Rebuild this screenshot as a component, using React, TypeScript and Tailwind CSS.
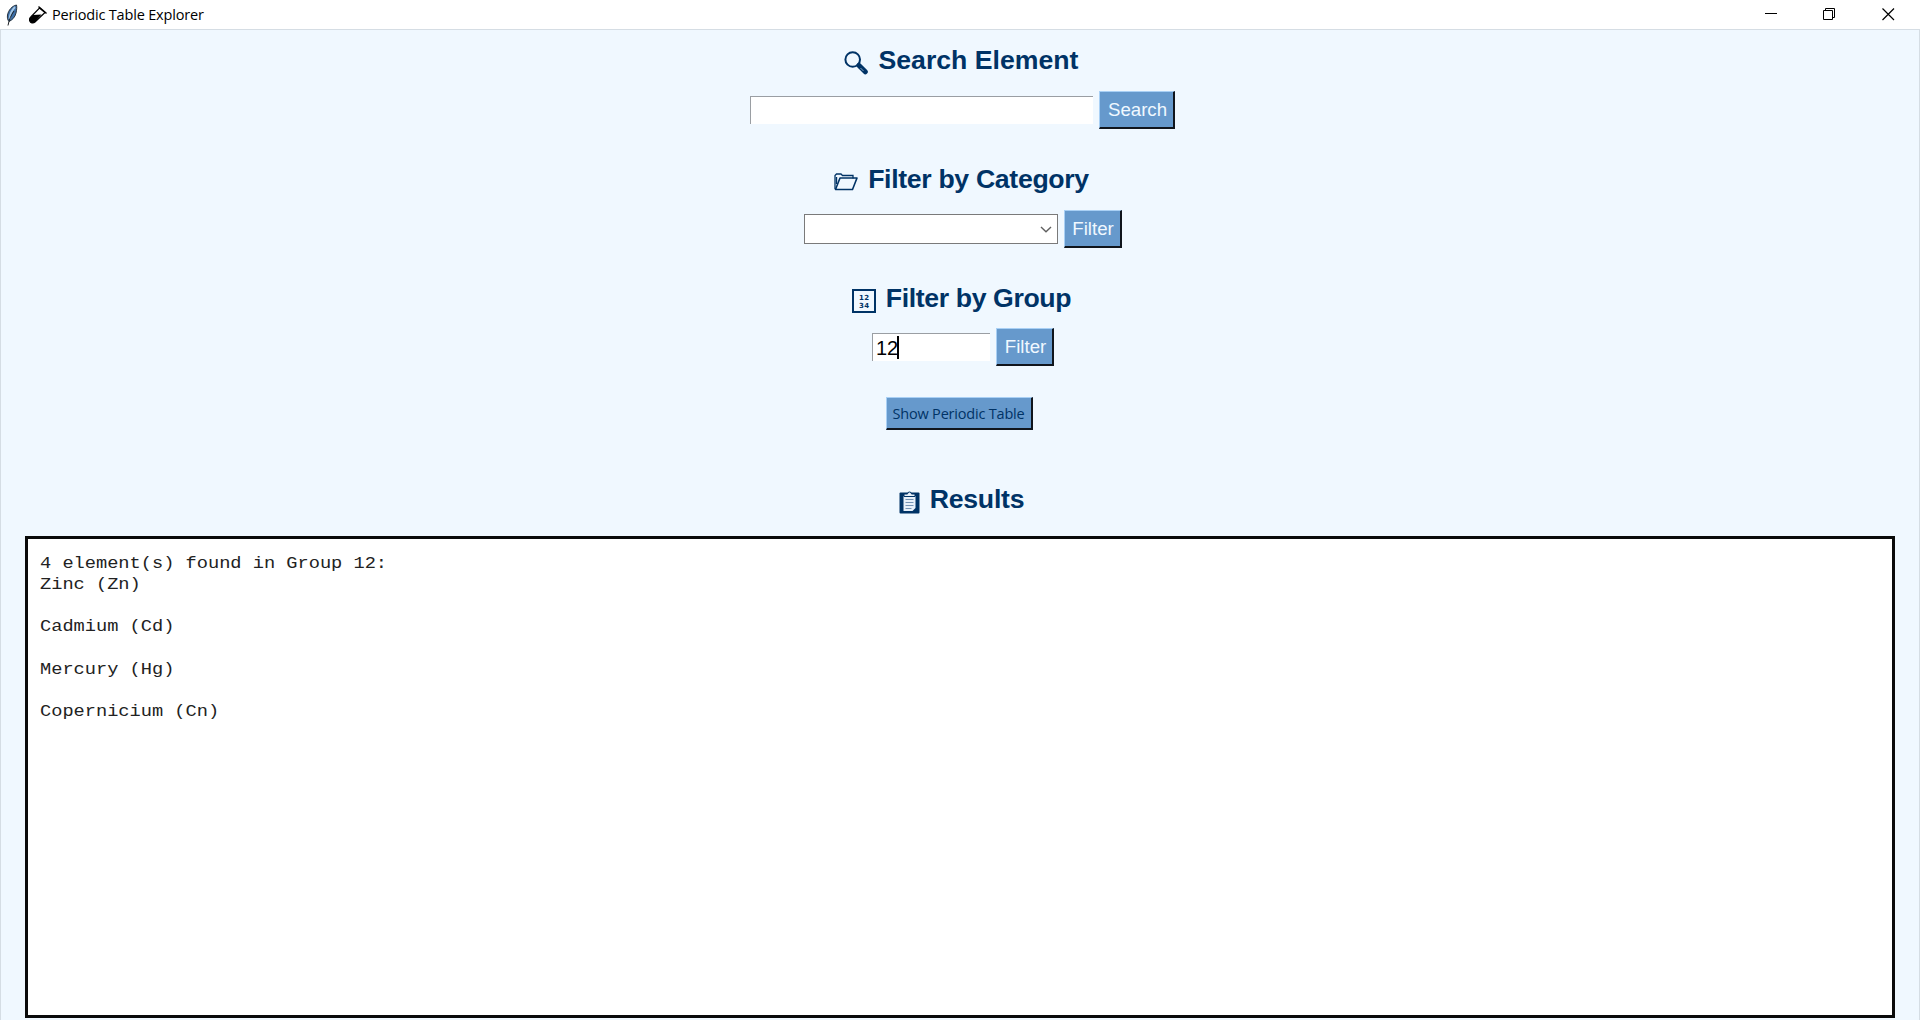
import React, { type ReactNode } from "react";

function Heading({ icon, children, tracking }: { icon: ReactNode; children: ReactNode; tracking: string }) {
  return (
    <h2 className="flex h-[40px] items-center justify-center gap-[10px] pl-[3px] font-['Liberation_Sans',sans-serif] text-[26.67px] leading-[40px] font-bold whitespace-nowrap text-[#003366]">
      {icon}
      <span className={tracking}>{children}</span>
    </h2>
  );
}

function Button({ children, className }: { children: ReactNode; className: string }) {
  return (
    <button
      className={`flex items-center justify-center border-t-1 border-r-2 border-b-2 border-l-1 border-t-[#a9d0f5] border-r-[#10151c] border-b-[#10151c] border-l-[#a9d0f5] bg-[#6699cc] whitespace-nowrap ${className}`}
    >
      {children}
    </button>
  );
}

const actionText = "h-[38px] pl-[2px] font-['Liberation_Sans',sans-serif] text-[18.67px] leading-[36px] text-[#f0f8ff]";
const field = "border-t border-l border-t-[#9a9ea3] border-l-[#9a9ea3] bg-white";

function Feather() {
  return (
    <svg className="ml-[6px] h-[22px] w-[12px]" viewBox="0 0 12 22">
      <path d="M10.500 1C6 2 2.500 6 1.500 11c-.4 3 .2 5 1.500 6.500 3-1.500 6-4 7-8.500C10.700 6 11 3 10.500 1Z" fill="#3d6fa8" stroke="#26333f" strokeWidth="1" />
      <path d="M9 3C6 6 4 10 3.500 15" stroke="#a5c8e6" strokeWidth="1.800" fill="none" />
      <path d="M8 7C5 11 3 16 2 21.500" stroke="#1f2326" strokeWidth="1" fill="none" />
    </svg>
  );
}

function TestTube() {
  return (
    <svg className="ml-[11px] h-[18px] w-[18px]" viewBox="0 0 18 18">
      <path d="M10.500 2 16 6.500 6 16C4 17.700 1.500 16.800.800 15 .200 13.500.600 12 2 10.700Z" fill="#fff" stroke="#000" strokeWidth="1.200" />
      <path d="M4 9 12.500 8.500 6 16C4 17.700 1.500 16.800.800 15 .200 13.500.600 12 2 10.700Z" fill="#000" />
      <path d="m10 1 7 6" stroke="#000" strokeWidth="1.600" strokeLinecap="round" />
    </svg>
  );
}

function Magnifier() {
  return (
    <svg className="mt-[6px] h-[24px] w-[24px]" viewBox="0 0 24 24" fill="none">
      <circle cx="8.700" cy="8.500" r="7.300" stroke="#003366" strokeWidth="2" />
      <path d="m13 13.500 3 2" stroke="#003366" strokeWidth="3" />
      <path d="m15 14.500 6.300 6.300" stroke="#003366" strokeWidth="5" strokeLinecap="round" />
      <path d="m16.500 17 3 3" stroke="#8aa6c4" strokeWidth="1" />
    </svg>
  );
}

function Folder() {
  return (
    <svg className="mt-[6px] h-[18px] w-[24px]" viewBox="0 0 24 18" fill="none" stroke="#003366">
      <path d="M1 16V2.500L2.500 1H7l1.500 1.500H19v3" strokeWidth="1.300" />
      <path d="M1.500 16.500 6 5h17l-4.500 11.500Z" strokeWidth="1.600" strokeLinejoin="round" />
      <path d="M2.500 4v7" strokeWidth="1.400" />
    </svg>
  );
}

function Numbers() {
  return (
    <svg className="mt-[5px] h-[24px] w-[24px]" viewBox="0 0 24 24" fill="none" stroke="#003366">
      <rect x="1" y="1" width="22" height="22" strokeWidth="2" />
      <text x="7" y="11" fontSize="7" fontWeight="700" fontFamily="DejaVu Sans" textLength="10" fill="#003366" stroke="none">12</text>
      <text x="7" y="18.500" fontSize="7" fontWeight="700" fontFamily="DejaVu Sans" textLength="10" fill="#003366" stroke="none">34</text>
    </svg>
  );
}

function Clipboard() {
  return (
    <svg className="mt-[5px] h-[24px] w-[21px]" viewBox="0 0 21 24">
      <rect x=".5" y="2.500" width="20" height="21" rx="1" fill="#003366" />
      <path d="M4.500 6h12v12l-3 3h-9Z" fill="#e8f1fb" />
      <path d="M5 6.500V4h3.500a2 2 0 0 1 4 0H16v2.500Z" fill="#e8f1fb" stroke="#003366" strokeWidth="1" />
      <path d="M6.500 9.500h8M6.500 12.500h8M6.500 15.500h8M6.500 18.500h6" stroke="#7593b5" strokeWidth="1" />
    </svg>
  );
}

const results = `4 element(s) found in Group 12:
Zinc (Zn)

Cadmium (Cd)

Mercury (Hg)

Copernicium (Cn)`;

export default function App() {
  return (
    <div className="flex h-[1020px] w-full flex-col overflow-hidden bg-white">
      <header className="flex h-[29px] shrink-0 items-center font-['Open_Sans',sans-serif] text-black">
        <Feather />
        <TestTube />
        <span className="ml-[5px] text-[14.5px] leading-[28px] tracking-[-0.18px] whitespace-nowrap">Periodic Table Explorer</span>
        <div className="mr-[25px] ml-auto flex items-center gap-[46px]">
          <svg className="h-[13px] w-[13px]" viewBox="0 0 13 13"><path d="M1 5.500h12" stroke="#000" /></svg>
          <svg className="h-[13px] w-[13px]" viewBox="0 0 13 13" fill="none" stroke="#000"><path d="M.5 2.500h9v9h-9ZM2.500 2.500v-2h9v9h-2" /></svg>
          <svg className="h-[13px] w-[13px]" viewBox="0 0 13 13" fill="none" stroke="#000" strokeWidth="1.200"><path d="m.5.5 11.500 11.500M12 .5.5 12" /></svg>
        </div>
      </header>
      <main className="flex min-h-0 flex-1 flex-col border-x border-t border-[#d5dde4] bg-[#f0f8ff]">
        <section className="pt-[10px]">
          <Heading icon={<Magnifier />} tracking="tracking-normal">Search Element</Heading>
          <div className="mt-[11px] flex h-[38px] items-center justify-center gap-[6px] pl-[5px]">
            <input className={`h-[28px] w-[343px] ${field}`} />
            <Button className={`w-[76px] ${actionText}`}>Search</Button>
          </div>
        </section>
        <section className="pt-[30px]">
          <Heading icon={<Folder />} tracking="tracking-[-0.33px]">Filter by Category</Heading>
          <div className="mt-[11px] flex h-[38px] items-center justify-center gap-[6px] pl-[5px]">
            <div className="flex h-[30px] w-[254px] items-center justify-end border border-[#7a7a7a] bg-white pr-[5px]">
              <svg className="h-[7px] w-[12px]" viewBox="0 0 12 7" fill="none"><path d="m1 1 5 4.700L11 1" stroke="#606060" strokeWidth="1.400" /></svg>
            </div>
            <Button className={`w-[58px] ${actionText}`}>Filter</Button>
          </div>
        </section>
        <section className="pt-[30px]">
          <Heading icon={<Numbers />} tracking="tracking-[-0.38px]">Filter by Group</Heading>
          <div className="mt-[10px] flex h-[38px] items-center justify-center gap-[6px] pl-[6px]">
            <div className={`flex h-[28px] w-[118px] items-center pl-[3px] font-['Liberation_Sans',sans-serif] text-[20px] leading-[28px] text-black ${field}`}>
              <span>12</span>
              <span className="-ml-px h-[23px] w-[2px] bg-black" />
            </div>
            <Button className={`w-[58px] ${actionText}`}>Filter</Button>
          </div>
        </section>
        <div className="mt-[31px] flex justify-center pr-[2px]">
          <Button className="h-[33px] w-[147px] pt-px font-['Open_Sans',sans-serif] text-[14.5px] tracking-[-0.2px] text-[#003366]">Show Periodic Table</Button>
        </div>
        <div className="mt-[49px]">
          <Heading icon={<Clipboard />} tracking="tracking-[-0.25px]">Results</Heading>
        </div>
        <div className="mx-[24px] mt-[17px] h-[482px] shrink-0 border-[3px] border-[#0a0a0a] bg-white">
          <pre className="mt-[14px] ml-[12px] origin-top scale-y-[0.860] font-['Liberation_Mono',monospace] text-[18.67px] leading-[24.750px] text-[#222]">{results}</pre>
        </div>
      </main>
    </div>
  );
}
